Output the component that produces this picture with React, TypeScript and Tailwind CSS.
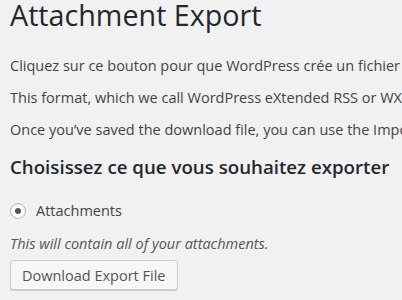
export default function App() {
  return (
    <div className="min-h-[300px] w-full overflow-hidden bg-[#f1f1f1] pl-[10px] text-[14.5px] leading-[19px] text-[#444] [font-family:'Open_Sans',sans-serif]">
      <h1 className="mb-[27px] whitespace-nowrap text-[28.7px] leading-[29px] font-normal text-[#23282d]">
        Attachment Export
      </h1>
      <p className="my-[13px] whitespace-nowrap">
        Cliquez sur ce bouton pour que WordPress crée un fichier XML que vous pourrez enregistrer sur votre ordinateur.
      </p>
      <p className="my-[13px] whitespace-nowrap">
        This format, which we call WordPress eXtended RSS or WXR, will contain your posts, pages, comments.
      </p>
      <p className="my-[13px] whitespace-nowrap">
        Once you’ve saved the download file, you can use the Import function in another WordPress installation.
      </p>
      <h2 className="mt-[16px] mb-[22px] whitespace-nowrap text-[18.7px] leading-[24px] font-semibold text-[#23282d]">
        Choisissez ce que vous souhaitez exporter
      </h2>
      <label className="flex items-center gap-[10px]">
        <span className="flex h-[16px] w-[16px] items-center justify-center rounded-full border border-[#b4b9be] bg-white shadow-[inset_0_1px_2px_rgba(0,0,0,0.1)]">
          <span className="h-[6px] w-[6px] rounded-full bg-[#555]" />
        </span>
        <span>Attachments</span>
      </label>
      <p className="mt-[14px] mb-[7px] italic text-[#555]">This will contain all of your attachments.</p>
      <button className="h-[30px] rounded-[3px] border border-[#ccc] bg-[#f7f7f7] px-[11px] text-[14.5px] text-[#555] shadow-[0_1px_0_#ccc]">
        Download Export File
      </button>
    </div>
  );
}
